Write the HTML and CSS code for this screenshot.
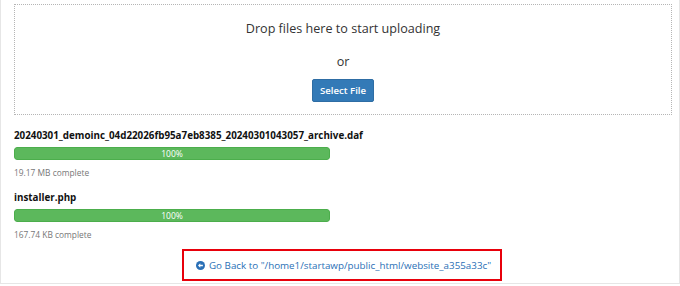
FILE: index.html
```html
<!DOCTYPE html>
<html>
<head>
    <title>Upload</title>
    <meta charset="UTF-8">
    <link rel="stylesheet" href="styles.css">
</head>
<body>
<div class="page">
    <div class="dropzone">
        <div class="drop-title">Drop files here to start uploading</div>
        <div class="drop-or">or</div>
        <button class="btn-select">Select File</button>
    </div>

    <div class="file">
        <div class="file-name">20240301_demoinc_04d22026fb95a7eb8385_20240301043057_archive.daf</div>
        <div class="bar"><div class="bar-fill" style="width: 100%">100%</div></div>
        <div class="file-size">19.17 MB complete</div>
    </div>

    <div class="file">
        <div class="file-name">installer.php</div>
        <div class="bar"><div class="bar-fill" style="width: 100%">100%</div></div>
        <div class="file-size">167.74 KB complete</div>
    </div>

    <div class="back-row">
        <a class="back" href="#">
            <svg class="back-icon" viewBox="0 0 16 16">
                <circle cx="8" cy="8" r="8"></circle>
                <path d="M3.6 8l4-4v2.6h4.6v2.8h-4.6v2.6z" fill="#fff"></path>
            </svg>
            Go Back to "/home1/startawp/public_html/website_a355a33c"
        </a>
    </div>
</div>
</body>
</html>
```
FILE: styles.css
```css
body {
    margin: 0;
    background-color: #fff;
    color: #333;
    font-family: "Open Sans", "Liberation Sans", sans-serif;
}

.page {
    height: 284px;
    box-sizing: border-box;
    border: 1px solid #e6e6e6;
    border-top: 0;
    padding: 4px 7px 0 13px;
}

.dropzone {
    height: 111px;
    box-sizing: border-box;
    border: 1px dotted #b5b5b5;
    display: flex;
    flex-direction: column;
    align-items: center;
    padding-top: 10px;
}

.drop-title {
    font-size: 12.6px;
    line-height: 28px;
}

.drop-or {
    font-size: 12.6px;
    line-height: 20px;
    margin-top: 9px;
}

.btn-select {
    margin-top: 7px;
    width: 62px;
    height: 23px;
    padding: 0;
    background-color: #337ab7;
    border: 1px solid #2e6da4;
    border-radius: 2px;
    color: #fff;
    font-family: "Open Sans", "Liberation Sans", sans-serif;
    font-size: 9.6px;
    font-weight: 600;
}

.file {
    width: 316px;
    margin-top: 13px;
}

.file + .file {
    margin-top: 10px;
}

.file-name {
    font-size: 9.8px;
    font-weight: 700;
    color: #111;
    line-height: 16px;
    white-space: nowrap;
}

.bar {
    margin-top: 3px;
    height: 13px;
    border-radius: 3px;
    background-color: #f5f5f5;
    overflow: hidden;
}

.bar-fill {
    height: 100%;
    box-sizing: border-box;
    background-color: #5cb85c;
    border: 1px solid #4cae4c;
    border-radius: 3px;
    color: #fff;
    font-size: 8.5px;
    line-height: 11px;
    text-align: center;
}

.file-size {
    margin-top: 6px;
    font-size: 8.4px;
    color: #777;
    line-height: 14px;
}

.back-row {
    display: flex;
    justify-content: center;
    margin-top: 7px;
    padding-right: 2px;
}

.back {
    display: flex;
    align-items: center;
    gap: 4px;
    width: 320px;
    height: 32px;
    box-sizing: border-box;
    border: 2px solid #e8000b;
    padding-left: 12px;
    color: #2a6fb6;
    font-size: 9.8px;
    white-space: nowrap;
    text-decoration: none;
}

.back-icon {
    width: 9px;
    height: 9px;
    flex-shrink: 0;
    fill: #2a6fb6;
}
```
